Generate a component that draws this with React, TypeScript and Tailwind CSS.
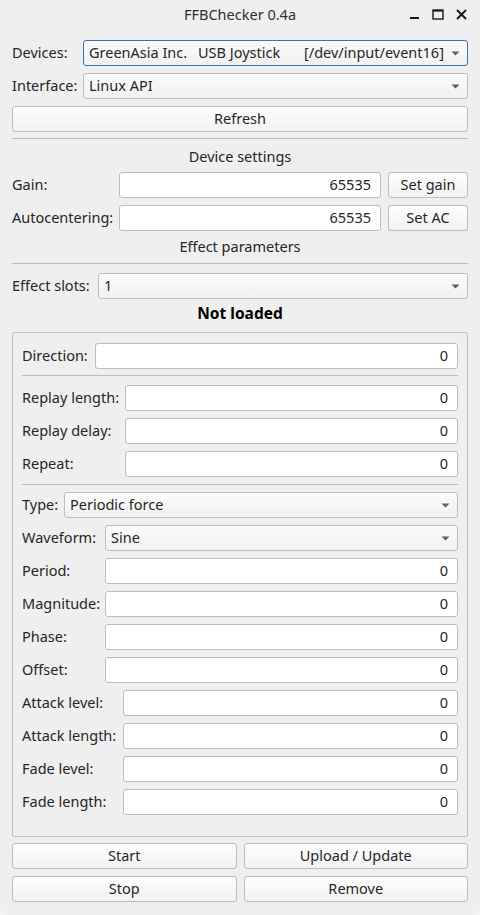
import React from 'react';

const font = { fontFamily: '"Noto Sans", "Open Sans", sans-serif' };

const Arrow = () => (
    <svg width="9" height="5" viewBox="0 0 9 5" className="shrink-0">
        <path d="M0.5 0.5 L8.5 0.5 L4.5 4.5 Z" fill="#5e5e5e" />
    </svg>
);

const Combo = ({ value, focused = false }: { value: React.ReactNode; focused?: boolean }) => (
    <div
        className={`flex-1 h-[26px] flex items-center justify-between pl-[5px] pr-[7px] rounded-[3px] border bg-gradient-to-b from-[#fbfbfb] to-[#f1f1f1] ${
            focused ? 'border-[#3d6fa8]' : 'border-[#bdbdbd]'
        }`}
    >
        <span className="flex whitespace-pre">{value}</span>
        <Arrow />
    </div>
);

const Button = ({ label, className = '' }: { label: string; className?: string }) => (
    <div
        className={`h-[26px] flex items-center justify-center rounded-[3px] border border-[#bdbdbd] bg-gradient-to-b from-[#fdfdfd] to-[#f2f2f2] ${className}`}
    >
        {label}
    </div>
);

const Field = ({ value }: { value: string }) => (
    <div className="flex-1 h-[26px] flex items-center justify-end pr-[9px] rounded-[3px] border border-[#bdbdbd] bg-white">
        {value}
    </div>
);

const Row = ({ label, labelW, children }: { label: string; labelW: string; children: React.ReactNode }) => (
    <div className="flex items-center h-[26px]">
        <div className={`${labelW} shrink-0 whitespace-nowrap`}>{label}</div>
        {children}
    </div>
);

const Separator = ({ className = '' }: { className?: string }) => <div className={`h-px bg-[#bcbcbc] ${className}`} />;

const Heading = ({ text, className = '' }: { text: string; className?: string }) => (
    <div className={`h-[26px] flex items-center justify-center ${className}`}>{text}</div>
);

export default function App() {
    return (
        <div className="w-[480px] h-[915px] bg-[#f6f6f6]">
            <div
                className="w-[480px] h-[915px] bg-[#efefef] rounded-b-[8px] text-[14.5px] text-[#262626] flex flex-col"
                style={font}
            >
                {/* title bar */}
                <div className="h-[30px] shrink-0 relative flex items-center justify-center">
                    <span className="text-[#303030]">FFBChecker 0.4a</span>
                    <div className="absolute right-[13px] top-[9px] flex items-center gap-[12px]">
                        <svg width="11" height="11" viewBox="0 0 11 11">
                            <rect x="1" y="8" width="9" height="2" fill="#1a1a1a" />
                        </svg>
                        <svg width="12" height="11" viewBox="0 0 12 11">
                            <rect x="1" y="1" width="10" height="9" fill="none" stroke="#1a1a1a" strokeWidth="1.4" />
                            <rect x="1" y="1" width="10" height="1.6" fill="#1a1a1a" />
                        </svg>
                        <svg width="11" height="11" viewBox="0 0 11 11">
                            <path d="M1 1 L10 10 M10 1 L1 10" stroke="#1a1a1a" strokeWidth="2" />
                        </svg>
                    </div>
                </div>

                <div className="px-3 pt-[10px] flex flex-col">
                    <Row label="Devices:" labelW="w-[71px]">
                        <Combo
                            focused
                            value={
                                <>
                                    <span className="w-[109px]">GreenAsia Inc.</span>
                                    <span className="w-[106px]">USB Joystick</span>
                                    <span>[/dev/input/event16]</span>
                                </>
                            }
                        />
                    </Row>
                    <div className="mt-[7px]">
                        <Row label="Interface:" labelW="w-[71px]">
                            <Combo value="Linux API" />
                        </Row>
                    </div>
                    <Button label="Refresh" className="mt-[7px]" />
                    <Separator className="mt-[6px]" />
                    <Heading text="Device settings" className="mt-[5px]" />
                    <div className="mt-[2px] flex flex-col gap-[7px]">
                        <Row label="Gain:" labelW="w-[107px]">
                            <Field value="65535" />
                            <Button label="Set gain" className="w-[80px] ml-[7px]" />
                        </Row>
                        <Row label="Autocentering:" labelW="w-[107px]">
                            <Field value="65535" />
                            <Button label="Set AC" className="w-[80px] ml-[7px]" />
                        </Row>
                    </div>
                    <Heading text="Effect parameters" className="mt-[3px]" />
                    <Separator className="mt-[3px]" />
                    <div className="mt-[9px]">
                        <Row label="Effect slots:" labelW="w-[86px]">
                            <Combo value="1" />
                        </Row>
                    </div>
                    <div className="h-[26px] mt-[2px] flex items-center justify-center font-bold text-[15.5px] text-black">
                        Not loaded
                    </div>

                    <div className="mt-[5px] h-[505px] border border-[#c2c2c2] rounded-[2px] pt-[10px] pl-[9px] pr-[9px] flex flex-col">
                        <Row label="Direction:" labelW="w-[73px]">
                            <Field value="0" />
                        </Row>
                        <Separator className="mt-[6px]" />
                        <div className="mt-[9px] flex flex-col gap-[7px]">
                            <Row label="Replay length:" labelW="w-[103px]">
                                <Field value="0" />
                            </Row>
                            <Row label="Replay delay:" labelW="w-[103px]">
                                <Field value="0" />
                            </Row>
                            <Row label="Repeat:" labelW="w-[103px]">
                                <Field value="0" />
                            </Row>
                        </div>
                        <Separator className="mt-[7px]" />
                        <div className="mt-[7px] flex flex-col gap-[7px]">
                            <Row label="Type:" labelW="w-[42px]">
                                <Combo value="Periodic force" />
                            </Row>
                            <Row label="Waveform:" labelW="w-[83px]">
                                <Combo value="Sine" />
                            </Row>
                            {['Period:', 'Magnitude:', 'Phase:', 'Offset:'].map((l) => (
                                <Row key={l} label={l} labelW="w-[83px]">
                                    <Field value="0" />
                                </Row>
                            ))}
                            {['Attack level:', 'Attack length:', 'Fade level:', 'Fade length:'].map((l) => (
                                <Row key={l} label={l} labelW="w-[101px]">
                                    <Field value="0" />
                                </Row>
                            ))}
                        </div>
                    </div>

                    <div className="mt-[6px] grid grid-cols-2 gap-x-[7px] gap-y-[7px]">
                        <Button label="Start" />
                        <Button label="Upload / Update" />
                        <Button label="Stop" />
                        <Button label="Remove" />
                    </div>
                </div>
            </div>
        </div>
    );
}
